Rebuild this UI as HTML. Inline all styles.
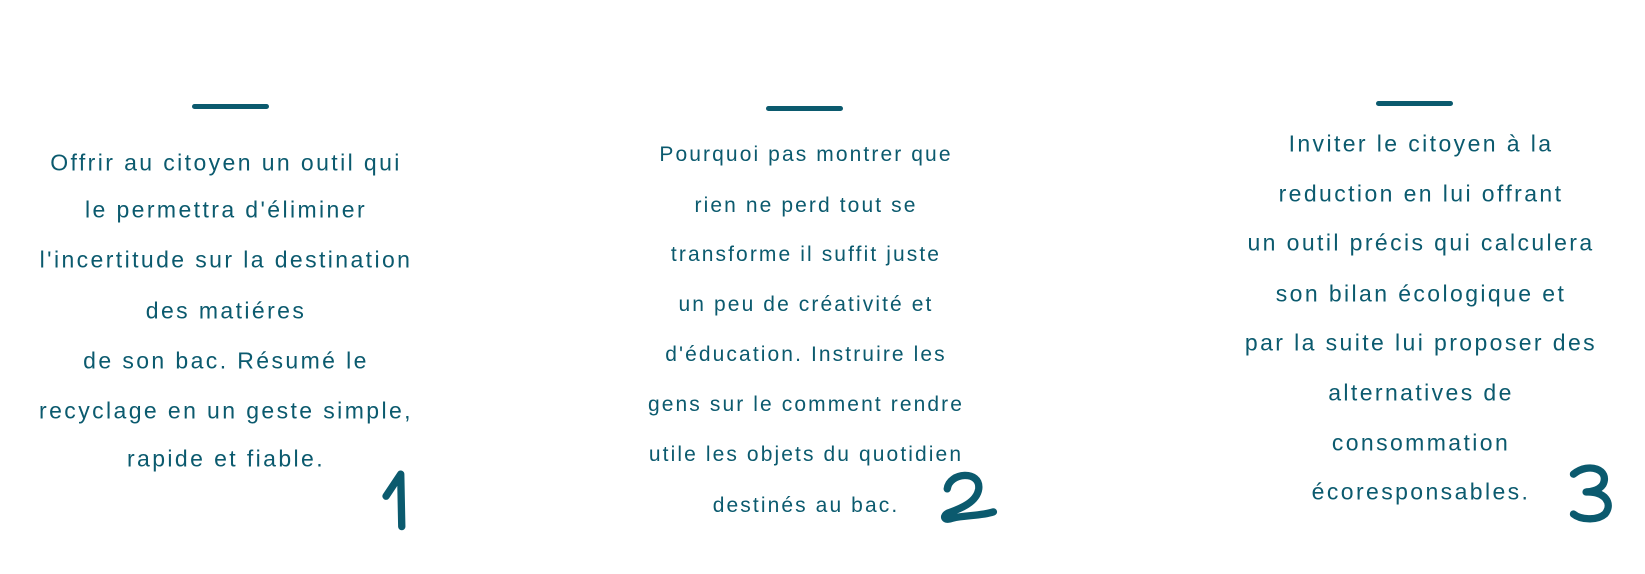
<!DOCTYPE html><html><head><style>
body{margin:0;width:1645px;height:574px;background:#fff;position:relative;overflow:hidden;font-family:"Liberation Sans",sans-serif;color:#0b5a6e}
.l{position:absolute;white-space:nowrap;transform:translate(-50%,-50%)}
.a{font-size:23px;letter-spacing:2.4px}
.b{font-size:21px;letter-spacing:2.1px}
.d{position:absolute;height:5px;background:#0b5a6e;border-radius:3px;width:77px}
svg{position:absolute;left:0;top:0}
</style></head><body>
<div class="d" style="left:192px;top:104px"></div>
<div class="d" style="left:766px;top:106px"></div>
<div class="d" style="left:1376px;top:101px"></div>
<div class="a">
<div class="l" style="left:226px;top:163px">Offrir au citoyen un outil qui</div>
<div class="l" style="left:226px;top:210px">le permettra d'éliminer</div>
<div class="l" style="left:226px;top:260px">l'incertitude sur la destination</div>
<div class="l" style="left:226px;top:311px">des matiéres</div>
<div class="l" style="left:226px;top:361px">de son bac. Résumé le</div>
<div class="l" style="left:226px;top:411px">recyclage en un geste simple,</div>
<div class="l" style="left:226px;top:459px">rapide et fiable.</div>
</div>
<div class="b">
<div class="l" style="left:806px;top:155px">Pourquoi pas montrer que</div>
<div class="l" style="left:806px;top:206px">rien ne perd tout se</div>
<div class="l" style="left:806px;top:255px">transforme il suffit juste</div>
<div class="l" style="left:806px;top:305px">un peu de créativité et</div>
<div class="l" style="left:806px;top:355px">d'éducation. Instruire les</div>
<div class="l" style="left:806px;top:405px">gens sur le comment rendre</div>
<div class="l" style="left:806px;top:455px">utile les objets du quotidien</div>
<div class="l" style="left:806px;top:506px">destinés au bac.</div>
</div>
<div class="a">
<div class="l" style="left:1421px;top:144px">Inviter le citoyen à la</div>
<div class="l" style="left:1421px;top:194px">reduction en lui offrant</div>
<div class="l" style="left:1421px;top:243px">un outil précis qui calculera</div>
<div class="l" style="left:1421px;top:294px">son bilan écologique et</div>
<div class="l" style="left:1421px;top:343px">par la suite lui proposer des</div>
<div class="l" style="left:1421px;top:393px">alternatives de</div>
<div class="l" style="left:1421px;top:443px">consommation</div>
<div class="l" style="left:1421px;top:492px">écoresponsables.</div>
</div>
<svg width="1645" height="574" fill="none" stroke="#0b5a6e" stroke-width="7" stroke-linecap="round" stroke-linejoin="round">
<g transform="scale(1.049)">
<path d="M368 473 L382 452 L383 502"/>
<path d="M903 466 C905 450 935 448 933 466 C931 480 912 486 904 489 C898 492 900 497 908 494 C920 491 935 492 947 488"/>
<path d="M1500 452 C1515 440 1535 448 1528 462 C1524 468 1515 469 1512 469 C1530 468 1538 480 1530 490 C1522 497 1506 495 1500 490"/>
</g>
</svg>
</body></html>
